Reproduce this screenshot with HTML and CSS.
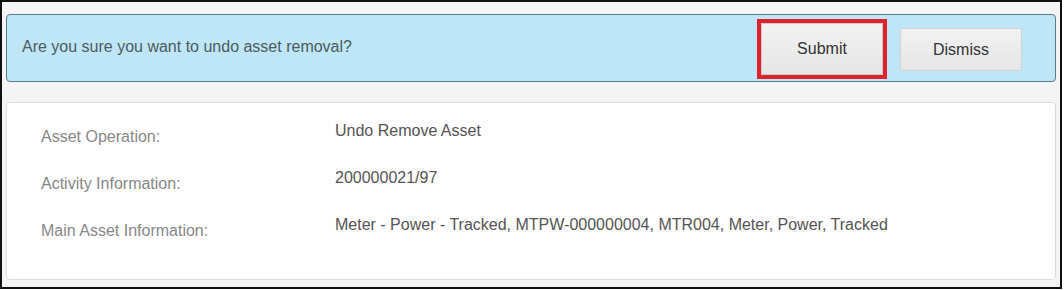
FILE: index.html
```html
<!DOCTYPE html>
<html lang="en">
<head>
    <meta charset="UTF-8">
    <meta name="viewport" content="width=device-width, initial-scale=1.0">
    <title>Undo Asset Removal</title>
    <link rel="stylesheet" href="styles.css">
</head>
<body>
    <div class="frame">
        <div class="confirm-bar">
            <div class="confirm-text">Are you sure you want to undo asset removal?</div>
            <div class="confirm-actions">
                <span class="highlight">
                    <button class="btn btn-submit">Submit</button>
                </span>
                <button class="btn">Dismiss</button>
            </div>
        </div>

        <div class="details">
            <div class="row">
                <div class="label">Asset Operation:</div>
                <div class="value">Undo Remove Asset</div>
            </div>
            <div class="row">
                <div class="label">Activity Information:</div>
                <div class="value">200000021/97</div>
            </div>
            <div class="row">
                <div class="label">Main Asset Information:</div>
                <div class="value">Meter - Power - Tracked, MTPW-000000004, MTR004, Meter, Power, Tracked</div>
            </div>
        </div>
    </div>
</body>
</html>
```

FILE: styles.css
```css
body {
    margin: 0;
    background: #fff;
    font-family: "Liberation Sans", Arial, sans-serif;
    font-size: 16px;
}
.frame {
    box-sizing: border-box;
    width: 1062px;
    height: 289px;
    border: 2px solid #111;
    background: #f4f4f4;
    padding: 12px 4px 0 4px;
}
.confirm-bar {
    box-sizing: border-box;
    height: 68px;
    display: flex;
    align-items: center;
    justify-content: space-between;
    background: #bee6f6;
    border: 1px solid #587c8c;
    border-radius: 4px;
    padding: 0 33px 0 15px;
}
.confirm-text {
    color: #4c5a61;
    line-height: 20px;
    margin-top: -3px;
}
.confirm-actions {
    display: flex;
    align-items: center;
    gap: 13px;
}
.highlight {
    display: block;
    border: 4px solid #e0212e;
    margin-top: 2px;
}
.btn {
    display: block;
    width: 122px;
    height: 43px;
    font-family: "Liberation Sans", Arial, sans-serif;
    font-size: 16px;
    color: #333;
    background: linear-gradient(#f2f2f2, #e6e6e6);
    border: 1px solid #d2d2d2;
    border-radius: 2px;
    padding: 0;
    margin-top: 3px;
}
.btn-submit {
    width: 122px;
    height: 52px;
    margin-top: 0;
    border-color: #c8c8c8;
}
.details {
    box-sizing: border-box;
    margin-top: 20px;
    height: 178px;
    background: #fff;
    border: 1px solid #dcdcdc;
    border-radius: 4px;
    padding: 18px 0 0 34px;
}
.row {
    display: grid;
    grid-template-columns: 294px 1fr;
    height: 47px;
    line-height: 20px;
}
.label {
    color: #888;
    padding-top: 6px;
}
.value {
    color: #555;
}
```
